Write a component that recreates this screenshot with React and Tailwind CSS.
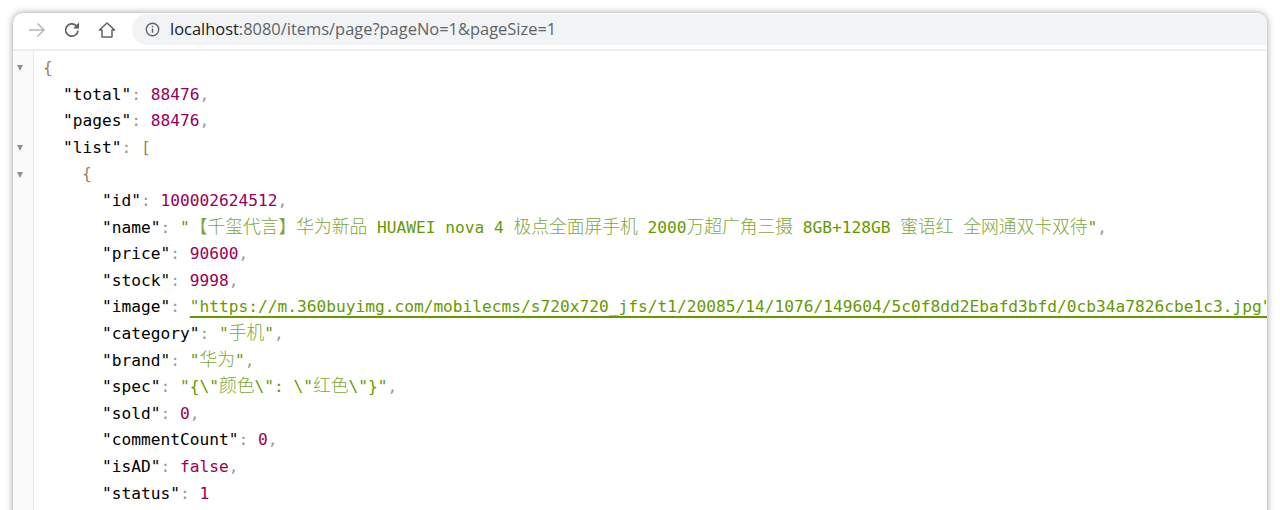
import React from 'react';

const mono = "font-['DejaVu_Sans_Mono','Noto_Sans_CJK_SC',monospace]";

const Key = ({ children }) => <span className="text-black">"{children}"</span>;
const P = ({ children }) => <span className="text-[#999]">{children}</span>;
const Num = ({ children }) => <span className="text-[#990055]">{children}</span>;
const Brace = ({ children }) => <span className="text-[#a67f59]">{children}</span>;
const Str = ({ children }) => <span className="text-[#669900]">{children}</span>;
const Cjk = ({ children }) => <span className="text-[17.76px] leading-none text-[#7ea63a] font-['Noto_Sans_CJK_SC',sans-serif] font-light">{children}</span>;

const Row = ({ indent, children }) => {
  const pad = { 0: 'pl-[9px]', 1: 'pl-[29px]', 2: 'pl-[48px]', 3: 'pl-[68px]' }[indent];
  return <div className={`h-[26.6px] leading-[26.6px] whitespace-pre ${pad}`}>{children}</div>;
};

const Fold = ({ open }) => (
  <div className="h-[26.6px] flex items-center pl-[4px]">
    {open ? <div className="w-0 h-0 border-l-[3.5px] border-r-[3.5px] border-t-[6px] border-l-transparent border-r-transparent border-t-[#909090]" /> : null}
  </div>
);

const Field = ({ name, children, last }) => (
  <Row indent={3}>
    <Key>{name}</Key><P>: </P>{children}{!last && <P>,</P>}
  </Row>
);

export default function App() {
  const folds = [true, false, false, true, true, false, false, false, false, false, false, false, false, false, false, false, false];

  return (
    <div className="h-[510px] overflow-hidden bg-white pt-[13px] px-[13px]">
      <div className="h-[520px] bg-white rounded-t-[10px] overflow-hidden shadow-[0_0_7px_rgba(0,0,0,0.4)] flex flex-col">
        {/* toolbar */}
        <div className="h-[36px] flex items-start shrink-0 border-b-2 border-[#eeeeee] box-content">
          <div className="flex items-center h-[33px] shrink-0">
            <svg className="ml-[15px]" width="18" height="18" viewBox="0 0 18 18" fill="none" stroke="#b4b6b8" strokeWidth="1.5">
              <path d="M1 9h15M9.5 2.5 16 9l-6.5 6.5" />
            </svg>
            <svg className="ml-[17px]" width="18" height="18" viewBox="0 0 18 18" fill="none" stroke="#5f6368" strokeWidth="1.7">
              <path d="M15 9.5A6.2 6.2 0 1 1 13.2 4.6L15.5 7" />
              <path d="M16 1.5V7.5H10" fill="#5f6368" stroke="none" />
            </svg>
            <svg className="ml-[17px]" width="18" height="18" viewBox="0 0 18 18" fill="none" stroke="#5f6368" strokeWidth="1.5">
              <path d="M1.5 9 9 2l7.5 7H14v7H4V9z" strokeLinejoin="round" />
            </svg>
          </div>
          <div className="ml-[16px] flex-1 h-[31px] mt-[1px] bg-[#f1f3f4] rounded-l-full flex items-center pl-[13px] font-['Open_Sans',sans-serif] text-[16.45px] whitespace-nowrap">
            <svg width="15" height="15" viewBox="0 0 15 15" fill="none" stroke="#5f6368" strokeWidth="1.4">
              <circle cx="7.5" cy="7.5" r="6.2" />
              <path d="M7.5 6.6v4.2M7.5 3.8v1.5" />
            </svg>
            <span className="ml-[10px] text-[#202124]">localhost</span>
            <span className="text-[#5f6368]">:8080/items/page?pageNo=1&amp;pageSize=1</span>
          </div>
        </div>

        {/* json body */}
        <div className={`flex flex-1 text-[16.2px] ${mono}`}>
          <div className="w-[21px] shrink-0 bg-[#fafafa] border-r border-[#eaeaea] pt-[4px]">
            {folds.map((open, i) => <Fold key={i} open={open} />)}
          </div>
          <div className="flex-1 min-w-0 overflow-hidden pt-[4px]">
            <Row indent={0}><Brace>{'{'}</Brace></Row>
            <Row indent={1}><Key>total</Key><P>: </P><Num>88476</Num><P>,</P></Row>
            <Row indent={1}><Key>pages</Key><P>: </P><Num>88476</Num><P>,</P></Row>
            <Row indent={1}><Key>list</Key><P>: </P><Brace>[</Brace></Row>
            <Row indent={2}><Brace>{'{'}</Brace></Row>
            <Field name="id"><Num>100002624512</Num></Field>
            <Field name="name">
              <Str>"<Cjk>【千玺代言】华为新品</Cjk> HUAWEI nova 4 <Cjk>极点全面屏手机</Cjk> 2000<Cjk>万超广角三摄</Cjk> 8GB+128GB <Cjk>蜜语红</Cjk> <Cjk>全网通双卡双待</Cjk>"</Str>
            </Field>
            <Field name="price"><Num>90600</Num></Field>
            <Field name="stock"><Num>9998</Num></Field>
            <Field name="image">
              <Str><span className="underline decoration-[1.5px] underline-offset-[4px]">"https://m.360buyimg.com/mobilecms/s720x720_jfs/t1/20085/14/1076/149604/5c0f8dd2Ebafd3bfd/0cb34a7826cbe1c3.jpg"</span></Str>
            </Field>
            <Field name="category"><Str>"<Cjk>手机</Cjk>"</Str></Field>
            <Field name="brand"><Str>"<Cjk>华为</Cjk>"</Str></Field>
            <Field name="spec"><Str>"{'{'}\"<Cjk>颜色</Cjk>\": \"<Cjk>红色</Cjk>\"{'}'}"</Str></Field>
            <Field name="sold"><Num>0</Num></Field>
            <Field name="commentCount"><Num>0</Num></Field>
            <Field name="isAD"><Num>false</Num></Field>
            <Field name="status" last><Num>1</Num></Field>
          </div>
        </div>
      </div>
    </div>
  );
}
